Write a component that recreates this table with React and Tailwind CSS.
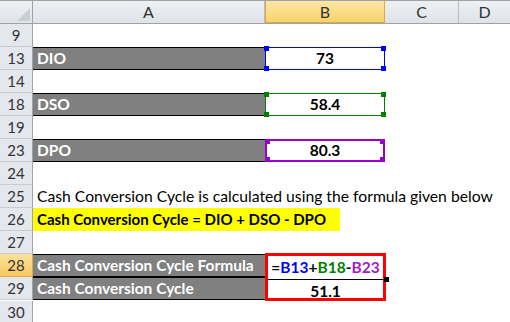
import React from 'react';

const font = { fontFamily: 'Lato, "Liberation Sans", sans-serif' };

const Corner = ({ color, pos }) => (
  <span className={`absolute w-[5px] h-[5px] ${color} ${pos}`} />
);

const Handles = ({ color }) => (
  <>
    <Corner color={color} pos="-left-[2px] -top-[2px]" />
    <Corner color={color} pos="-right-[2px] -top-[2px]" />
    <Corner color={color} pos="-left-[2px] -bottom-[2px]" />
    <Corner color={color} pos="-right-[2px] -bottom-[2px]" />
  </>
);

const RowHead = ({ n, active }) => (
  <div
    className={`w-[33px] shrink-0 h-full flex items-center justify-center border-r border-b text-[15px] ${
      active
        ? 'bg-gradient-to-b from-[#fbe29a] to-[#f7c95f] border-[#e2a847] text-[#333]'
        : 'bg-[#e4e7ec] border-r-[#9ea3aa] border-b-[#c8ccd2] text-[#333]'
    }`}
  >
    {n}
  </div>
);

const Row = ({ n, active, children }) => (
  <div className="flex h-[23px]">
    <RowHead n={n} active={active} />
    <div className="flex-1 flex h-full">{children}</div>
  </div>
);

const GrayCell = ({ children }) => (
  <div className="w-[232px] shrink-0 h-full bg-[#808080] border-y border-black text-white font-bold text-[15.5px] flex items-center pl-[4px] whitespace-nowrap overflow-visible">
    {children}
  </div>
);

const ValueCell = ({ border, handle, children }) => (
  <div className={`relative w-[120px] shrink-0 h-full bg-white flex items-center justify-center font-bold text-[15.5px] text-black ${border}`}>
    {children}
    <Handles color={handle} />
  </div>
);

export default function App() {
  return (
    <div className="w-[510px] h-[322px] bg-white overflow-hidden" style={font}>
      {/* column header */}
      <div className="flex h-[24px] border-t border-[#a0a4aa] bg-gradient-to-b from-[#eef0f3] to-[#dfe3e8] border-b border-b-[#9ea3aa] text-[16px] text-[#333]">
        <div className="w-[33px] shrink-0 relative border-r border-[#9ea3aa]">
          <svg className="absolute left-0 top-0" width="33" height="23" viewBox="0 0 33 23">
            <polygon points="17,20 30,20 30,7" fill="#c9ced5" />
          </svg>
        </div>
        <div className="w-[232px] shrink-0 flex items-center justify-center border-r border-[#b8bcc2]">A</div>
        <div className="w-[120px] shrink-0 flex items-center justify-center bg-gradient-to-b from-[#fce6a3] to-[#f9d46a] border-x border-b border-[#e2a847]">B</div>
        <div className="w-[74px] shrink-0 flex items-center justify-center border-r border-[#b8bcc2]">C</div>
        <div className="flex-1 flex items-center justify-center">D</div>
      </div>

      <Row n="9" />
      <Row n="13">
        <GrayCell>DIO</GrayCell>
        <ValueCell border="border border-[#0000ff]" handle="bg-[#0000ff]">73</ValueCell>
      </Row>
      <Row n="14" />
      <Row n="18">
        <GrayCell>DSO</GrayCell>
        <ValueCell border="border border-[#008000]" handle="bg-[#008000]">58.4</ValueCell>
      </Row>
      <Row n="19" />
      <Row n="23">
        <GrayCell>DPO</GrayCell>
        <ValueCell border="border-2 border-[#9900cc]" handle="bg-[#9900cc]">80.3</ValueCell>
      </Row>
      <Row n="24" />
      <Row n="25">
        <div className="pl-[4px] flex items-center text-[15.7px] text-black whitespace-nowrap">
          Cash Conversion Cycle is calculated using the formula given below
        </div>
      </Row>
      <Row n="26">
        <div className="w-[307px] bg-[#ffff00] pl-[4px] flex items-center font-bold text-[15px] text-black whitespace-nowrap">
          Cash Conversion Cycle = DIO + DSO - DPO
        </div>
      </Row>
      <Row n="27" />
      <div className="flex">
        <div className="flex flex-col">
          <div className="flex h-[23px]">
            <RowHead n="28" active />
            <GrayCell>Cash Conversion Cycle Formula</GrayCell>
          </div>
          <div className="flex h-[23px]">
            <RowHead n="29" />
            <GrayCell>Cash Conversion Cycle</GrayCell>
          </div>
        </div>
        <div className="w-[121px] shrink-0 h-[48px] -mt-[1px] border-[3px] border-[#ff0000] bg-white flex flex-col font-bold text-[15.5px]">
          <div className="relative flex-1 flex items-center justify-center border-b border-black">
            <span>=</span>
            <span className="text-[#0000ff]">B13</span>
            <span>+</span>
            <span className="text-[#008000]">B18</span>
            <span>-</span>
            <span className="text-[#a020c8]">B23</span>
            <span className="absolute -right-[6px] -bottom-[3px] w-[5px] h-[5px] bg-black" />
          </div>
          <div className="flex-1 flex items-center justify-center">51.1</div>
        </div>
      </div>
      <Row n="30" />
    </div>
  );
}
